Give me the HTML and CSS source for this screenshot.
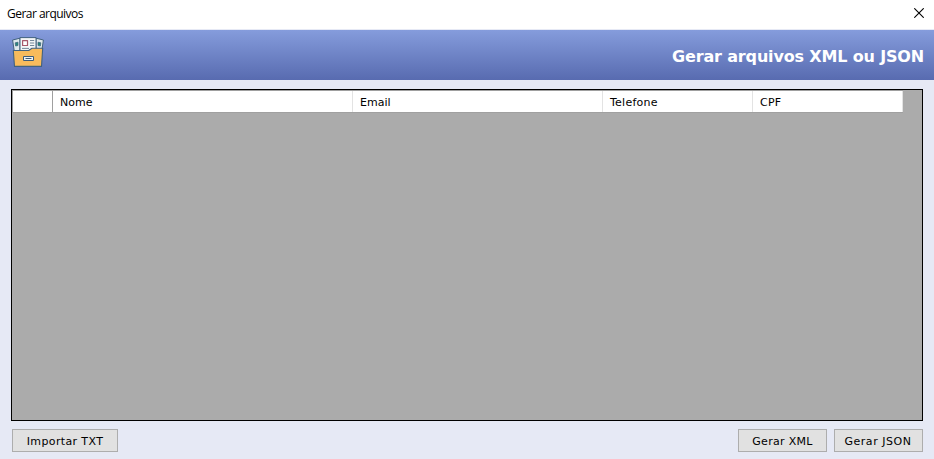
FILE: index.html
```html
<!DOCTYPE html>
<html lang="pt-BR">
<head>
<meta charset="utf-8">
<title>Gerar arquivos</title>
<link rel="stylesheet" href="styles.css">
</head>
<body>
<header class="titlebar">
  <span class="caption">Gerar arquivos</span>
  <svg class="close" width="10" height="10" viewBox="0 0 10 10"><path d="M.3.3l9.4 9.4M9.7.3L.3 9.7" stroke="#000" stroke-width="1.1"/></svg>
</header>
<section class="banner">
  <svg class="logo" width="32" height="32" viewBox="0 0 32 32" stroke-linejoin="round">
    <g stroke="#42627f" stroke-width="1">
      <path d="M.6 3 8 1.2V15H2.4z" fill="#dfe9ec"/>
      <path d="M31.4 3 24 1.2V15h5.6z" fill="#dfe9ec"/>
      <path d="M8 .6h16V15H8z" fill="#f3f6f6"/>
    </g>
    <path d="M3.2 5.8l2.8-.6v3.3l-2.4.5zM26 5.2l2.8.6-.4 3.2-2.4-.5z" fill="#258a7d" stroke="#41617a" stroke-width=".7"/>
    <path d="M10.6 3.6h4.9v4.9h-4.9z" fill="#fff" stroke="#a8596a" stroke-width="1.2"/>
    <path d="M18 3.5h4.2M18 6h4.2M18 8.5h4.2M10 11.4h7" stroke="#74899a" stroke-width="1"/>
    <path d="M1.3 13.5h15.4l3.3-2.3h10.7L29.5 29.4H2.5z" fill="#f8bb5c" stroke="#42627f" stroke-width="1.1"/>
    <path d="M11.5 19.5h10v4h-10z" fill="#edf2f4" stroke="#3e5c77" stroke-width="1"/>
    <path d="M13.5 21.5h6" stroke="#3e5c77"/>
  </svg>
  <h1>Gerar arquivos XML ou JSON</h1>
</section>
<main>
  <div class="grid">
    <div class="head">
      <span class="corner"></span><span>Nome</span><span>Email</span><span class="wide">Telefone</span><span class="wide">CPF</span>
    </div>
  </div>
  <footer>
    <button class="import">Importar TXT</button>
    <button class="xml">Gerar XML</button>
    <button class="json">Gerar JSON</button>
  </footer>
</main>
</body>
</html>
```
FILE: styles.css
```css
* { box-sizing: border-box; }
body {
  margin: 0;
  height: 459px;
  overflow: hidden;
  display: flex;
  flex-direction: column;
  background: #e6e9f5;
  color: #000;
  font: 11px/14px "DejaVu Sans", Verdana, sans-serif;
}
.titlebar {
  height: 29px;
  flex: none;
  display: flex;
  justify-content: space-between;
  padding: 6px 10px 0 7px;
  background: #fff;
}
.caption {
  font: 12px/16px "Open Sans", "Segoe UI", sans-serif;
  letter-spacing: -0.53px;
}
.close { margin-top: 2px; }
.banner {
  height: 51px;
  flex: none;
  display: flex;
  justify-content: space-between;
  padding: 7px 10px 0 12px;
  border-top: 1px solid #e6e9f5;
  background: linear-gradient(#859cdc, #586bb0) padding-box;
}
h1 {
  margin: 10px 0 0;
  color: #fff;
  font-size: 16px;
  line-height: 20px;
  font-weight: bold;
  letter-spacing: -0.16px;
}
main {
  flex: 1;
  padding: 9px 11px 0;
}
.grid {
  height: 332px;
  border: 1px solid #000;
  background: #ababab;
}
.head {
  width: 891px;
  height: 23px;
  display: grid;
  grid-template-columns: 40px 300px 250px 150px 150px;
  border: solid #a0a0a0;
  border-width: 1px 0 1px 1px;
  background: #fff;
}
.head span {
  padding: 5px 0 0 7px;
  border-right: 1px solid #e3e3e3;
}
.head .corner { border-right-color: #a0a0a0; }
.head .wide { letter-spacing: 0.25px; }
footer {
  display: flex;
  gap: 7px;
  padding: 8px 0 0 1px;
}
button {
  width: 89px;
  height: 23px;
  padding: 2px 0 0;
  border: 1px solid #adadad;
  background: #e1e1e1;
  color: #000;
  font: inherit;
  white-space: nowrap;
}
.import {
  width: 106px;
  margin-right: auto;
  letter-spacing: 0.38px;
}
.xml { letter-spacing: 0.3px; }
.json {
  padding-right: 1px;
  letter-spacing: 0.55px;
}
```
